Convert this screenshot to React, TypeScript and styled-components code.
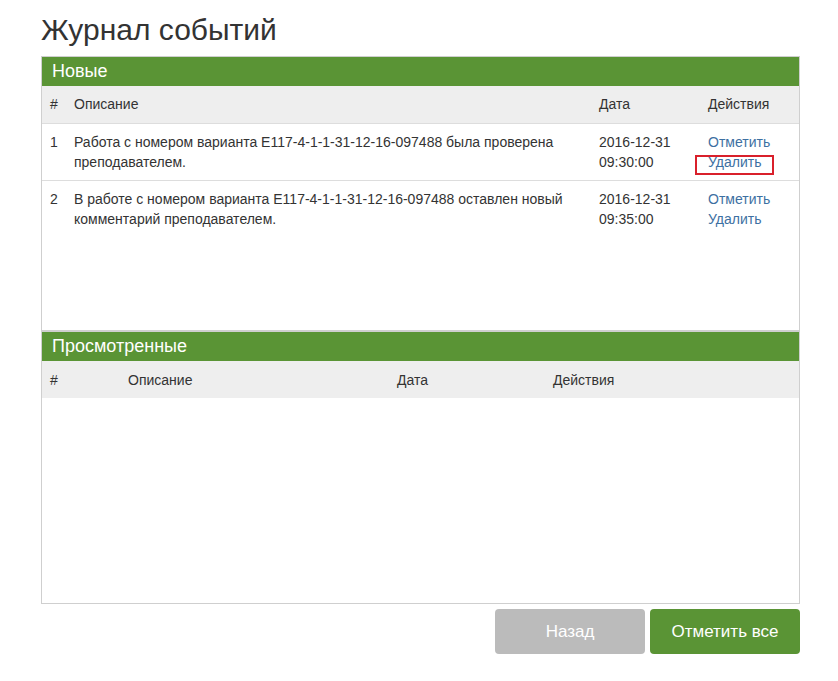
import React from "react";
import styled, { createGlobalStyle } from "styled-components";

const Global = createGlobalStyle`
  html, body { margin: 0; padding: 0; background: #fff; }
  body {
    font-family: "Liberation Sans", Arial, sans-serif;
    font-size: 14px;
    line-height: 20px;
    color: #333;
  }
`;

const Page = styled.div`
  width: 759px;
  padding: 13px 0 0 41px;
  display: flex;
  flex-direction: column;
`;

const Title = styled.h1`
  margin: 0 0 10px;
  font-size: 30px;
  line-height: 33px;
  font-weight: 400;
  color: #333;
`;

const Panel = styled.section<{ $h: number }>`
  height: ${(p) => p.$h}px;
  box-sizing: border-box;
  border: 1px solid #cfcfcf;
  display: flex;
  flex-direction: column;
  overflow: hidden;
`;

const PanelHeader = styled.div`
  background: #5a9435;
  color: #fff;
  font-size: 18px;
  line-height: 29px;
  height: 29px;
  padding: 0 10px;
  flex: none;
`;

const Table = styled.table`
  width: 757px;
  border-collapse: collapse;
  table-layout: fixed;
`;

const HeadRow = styled.tr`
  background: #eeeeee;
`;

const Th = styled.th<{ $w: number }>`
  width: ${(p) => p.$w}px;
  box-sizing: border-box;
  text-align: left;
  font-weight: 400;
  padding: 8px;
  height: 37px;
  line-height: 20px;
  vertical-align: middle;
`;

const Tr = styled.tr`
  border-top: 1px solid #dddddd;
`;

const Td = styled.td`
  padding: 8px;
  vertical-align: top;
  line-height: 20px;
`;

const Actions = styled.div`
  display: flex;
  flex-direction: column;
  align-items: flex-start;
`;

const Link = styled.a`
  color: #3d70a2;
  text-decoration: none;
  position: relative;
  cursor: pointer;
`;

const Highlight = styled.span`
  position: absolute;
  left: -13px;
  top: 3px;
  width: 79px;
  height: 20px;
  box-sizing: border-box;
  border: 2px solid #d9202b;
  pointer-events: none;
`;

const Buttons = styled.div`
  display: flex;
  justify-content: flex-end;
  gap: 5px;
  margin-top: 5px;
`;

const Button = styled.button<{ $variant: "muted" | "primary" }>`
  width: 150px;
  height: 45px;
  border: none;
  border-radius: 4px;
  font-family: "Liberation Sans", Arial, sans-serif;
  font-size: 17px;
  color: #fff;
  background: ${(p) => (p.$variant === "primary" ? "#5a9435" : "#bbbbbb")};
  cursor: pointer;
`;

const events = [
  {
    n: 1,
    text: "Работа с номером варианта E117-4-1-1-31-12-16-097488 была проверена преподавателем.",
    date: "2016-12-31",
    time: "09:30:00",
    marked: true,
  },
  {
    n: 2,
    text: "В работе с номером варианта E117-4-1-1-31-12-16-097488 оставлен новый комментарий преподавателем.",
    date: "2016-12-31",
    time: "09:35:00",
    marked: false,
  },
];

export default function App() {
  return (
    <>
      <Global />
      <Page>
        <Title>Журнал событий</Title>
        <Panel $h={275}>
          <PanelHeader>Новые</PanelHeader>
          <Table>
            <thead>
              <HeadRow>
                <Th $w={24}>#</Th>
                <Th $w={525}>Описание</Th>
                <Th $w={109}>Дата</Th>
                <Th $w={99}>Действия</Th>
              </HeadRow>
            </thead>
            <tbody>
              {events.map((e) => (
                <Tr key={e.n}>
                  <Td>{e.n}</Td>
                  <Td>{e.text}</Td>
                  <Td>
                    {e.date}
                    <br />
                    {e.time}
                  </Td>
                  <Td>
                    <Actions>
                      <Link>Отметить</Link>
                      <Link>
                        Удалить
                        {e.marked && <Highlight />}
                      </Link>
                    </Actions>
                  </Td>
                </Tr>
              ))}
            </tbody>
          </Table>
        </Panel>
        <Panel $h={273}>
          <PanelHeader>Просмотренные</PanelHeader>
          <Table>
            <thead>
              <HeadRow>
                <Th $w={78}>#</Th>
                <Th $w={269}>Описание</Th>
                <Th $w={156}>Дата</Th>
                <Th $w={254}>Действия</Th>
              </HeadRow>
            </thead>
          </Table>
        </Panel>
        <Buttons>
          <Button $variant="muted">Назад</Button>
          <Button $variant="primary">Отметить все</Button>
        </Buttons>
      </Page>
    </>
  );
}
